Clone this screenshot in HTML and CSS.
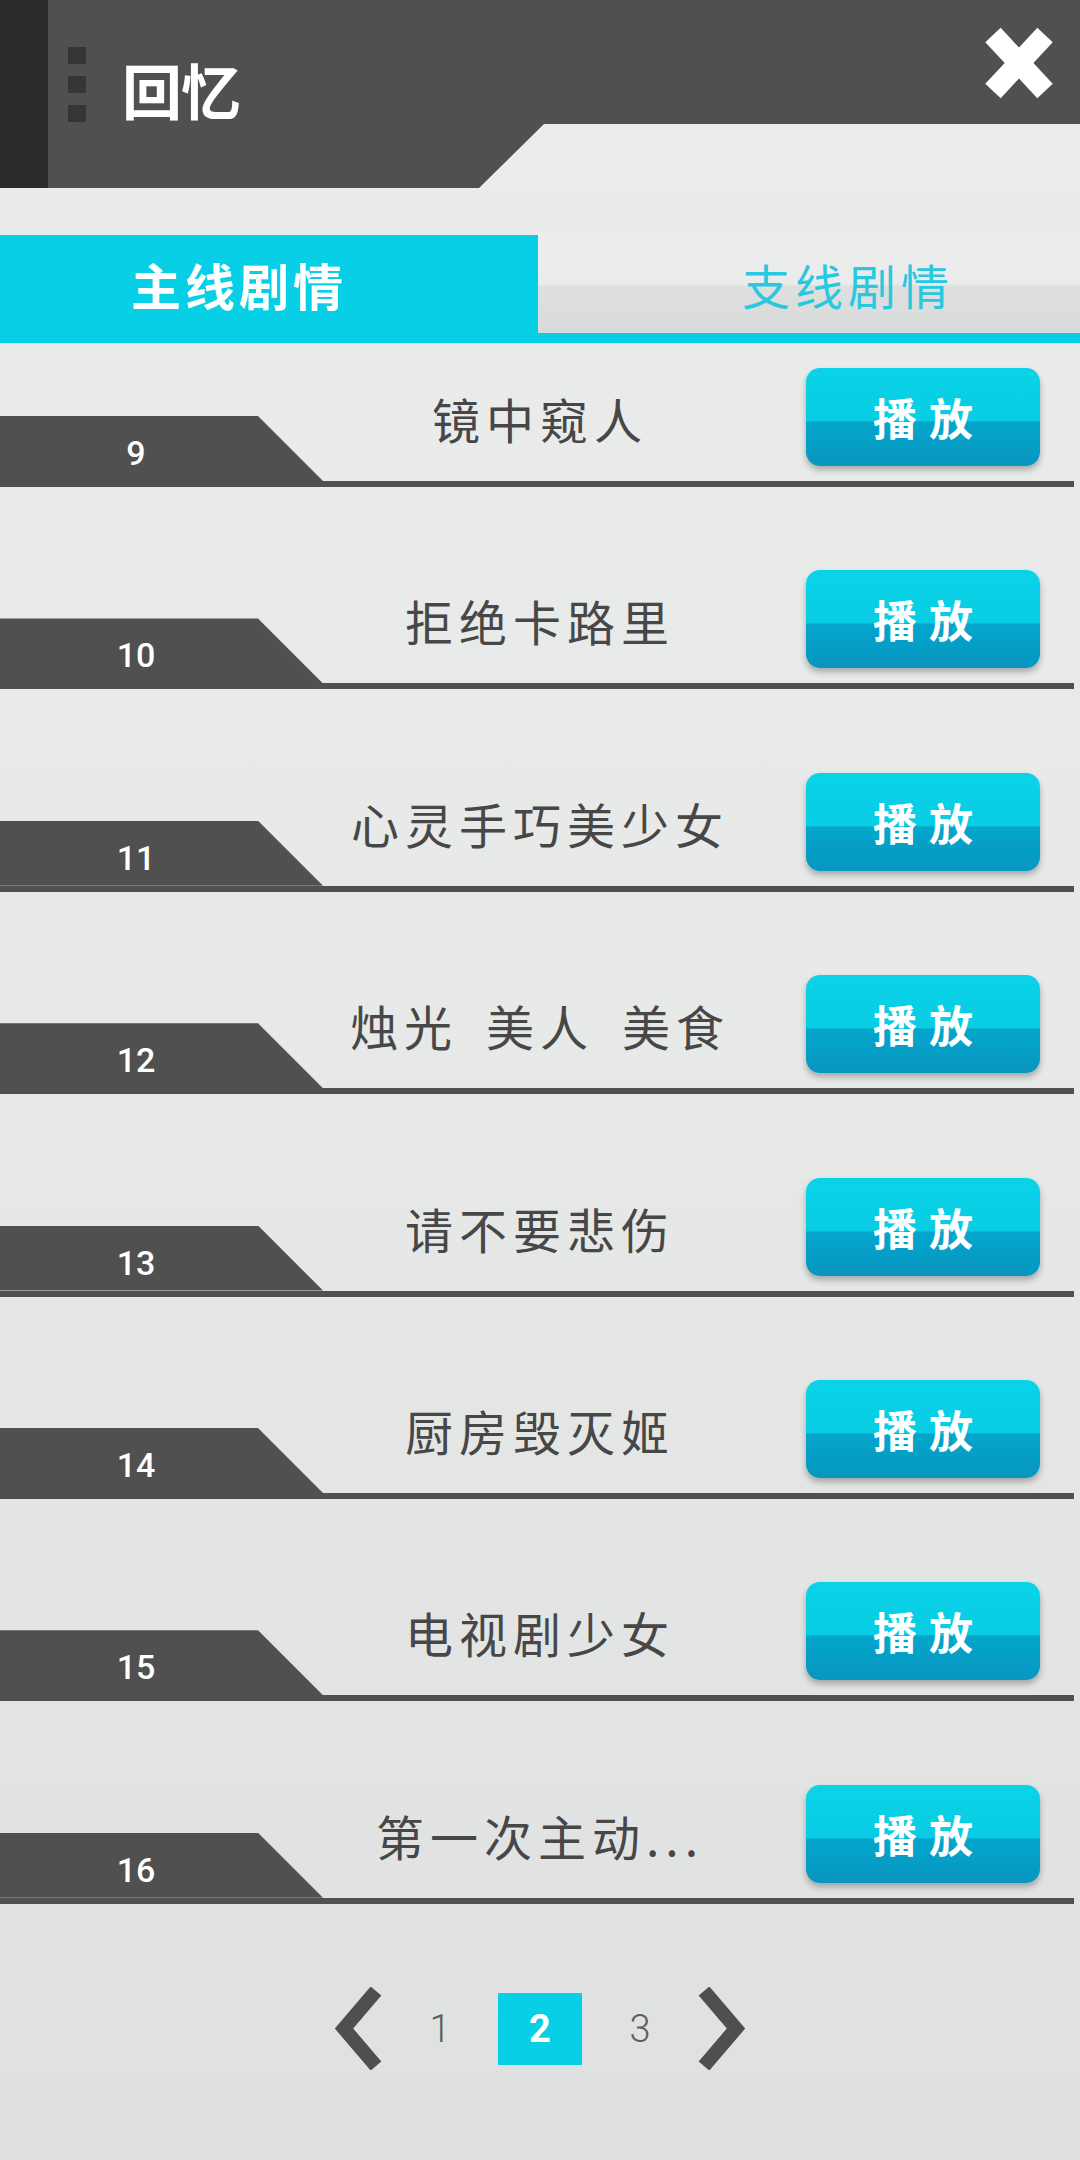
FILE: index.html
```html
<!DOCTYPE html>
<html lang="zh-CN">
<head>
<meta charset="utf-8">
<title>回忆</title>
<link rel="stylesheet" href="styles.css">
</head>
<body>
<div class="page">
  <header class="header">
    <div class="strip"></div>
    <div class="dots"><span></span><span></span><span></span></div>
    <h1 class="title">回忆</h1>
    <div class="spacer"></div>
    <svg class="close" viewBox="0 0 72 76" width="72" height="76" aria-label="关闭">
      <path d="M10 10 L62 66 M62 10 L10 66" stroke="#fff" stroke-width="21" stroke-linecap="butt" fill="none"/>
    </svg>
  </header>

  <nav class="tabs">
    <div class="tab tab-active"><span>主线剧情</span></div>
    <div class="tab tab-idle"><span>支线剧情</span></div>
  </nav>

  <ul class="list">
    <li class="row"><div class="row-inner"><div class="num"><span>9</span></div><div class="name">镜中窥人</div><button class="play">播放</button></div></li>
    <li class="row"><div class="row-inner"><div class="num"><span>10</span></div><div class="name">拒绝卡路里</div><button class="play">播放</button></div></li>
    <li class="row"><div class="row-inner"><div class="num"><span>11</span></div><div class="name">心灵手巧美少女</div><button class="play">播放</button></div></li>
    <li class="row"><div class="row-inner"><div class="num"><span>12</span></div><div class="name">烛光<span class="sp"></span>美人<span class="sp"></span>美食</div><button class="play">播放</button></div></li>
    <li class="row"><div class="row-inner"><div class="num"><span>13</span></div><div class="name">请不要悲伤</div><button class="play">播放</button></div></li>
    <li class="row"><div class="row-inner"><div class="num"><span>14</span></div><div class="name">厨房毁灭姬</div><button class="play">播放</button></div></li>
    <li class="row"><div class="row-inner"><div class="num"><span>15</span></div><div class="name">电视剧少女</div><button class="play">播放</button></div></li>
    <li class="row"><div class="row-inner"><div class="num"><span>16</span></div><div class="name">第一次主动...</div><button class="play">播放</button></div></li>
  </ul>

  <div class="pager">
    <svg class="chev" viewBox="0 0 50 83" width="50" height="83"><polyline points="44,4 12,41.5 44,79" fill="none" stroke="#4f4f4f" stroke-width="14" stroke-linejoin="miter" stroke-miterlimit="10"/></svg>
    <span class="pg">1</span>
    <span class="pg pg-on">2</span>
    <span class="pg">3</span>
    <svg class="chev" viewBox="0 0 50 83" width="50" height="83"><polyline points="6,4 38,41.5 6,79" fill="none" stroke="#4f4f4f" stroke-width="14" stroke-linejoin="miter" stroke-miterlimit="10"/></svg>
  </div>
</div>
</body>
</html>
```

FILE: styles.css
```css
* { box-sizing: border-box; }

html, body {
  margin: 0;
  padding: 0;
}

body {
  width: 1080px;
  height: 2160px;
  overflow: hidden;
  background: linear-gradient(to bottom, #ebecec 0%, #e7e8e8 50%, #dfe1e1 100%);
  font-family: "Noto Sans CJK SC", "Noto Sans", sans-serif;
}

.page {
  width: 1080px;
  height: 2160px;
}

/* Header */
.header {
  display: flex;
  align-items: flex-start;
  height: 188px;
  background: #505050;
  clip-path: polygon(0 0, 100% 0, 100% 124px, 544px 124px, 479px 100%, 0 100%);
}

.strip {
  width: 48px;
  height: 188px;
  background: #2c2c2c;
  flex: none;
}

.dots {
  display: flex;
  flex-direction: column;
  gap: 12px;
  margin: 47px 0 0 20px;
}

.dots span {
  display: block;
  width: 18px;
  height: 17px;
  background: #363636;
}

.title {
  margin: 54px 0 0 36px;
  font-size: 60px;
  line-height: 70px;
  font-weight: 700;
  color: #ffffff;
  letter-spacing: -1px;
}

.spacer { flex: 1; }

.close {
  margin: 25px 25px 0 0;
  display: block;
}

/* Tabs */
.tabs {
  display: flex;
  margin-top: 47px;
  height: 108px;
  border-bottom: 10px solid #06cfe6;
}

.tab {
  height: 98px;
  display: flex;
  align-items: center;
}

.tab-active {
  width: 538px;
  background: #06cfe6;
  padding-left: 131px;
}

.tab-active span {
  font-size: 50px;
  font-weight: 700;
  letter-spacing: 4px;
  color: #ffffff;
}

.tab-idle {
  flex: 1;
  background: linear-gradient(to bottom, #ededed 0%, #eaebeb 50%, #dedfdf 52%, #d9dbdb 100%);
  padding-left: 204px;
}

.tab-idle span {
  font-size: 48px;
  letter-spacing: 5px;
  color: #2ac8df;
}

/* List */
.list {
  list-style: none;
  margin: 0;
  padding: 0;
}

.row {
  height: 202.4px;
  padding-top: 25px;
}

.row-inner {
  display: flex;
  align-items: flex-start;
  width: 1074px;
  height: 119px;
  border-bottom: 6px solid #505050;
}

.num {
  width: 323px;
  height: 65px;
  align-self: flex-end;
  background: #505050;
  clip-path: polygon(0 0, 258px 0, 100% 100%, 0 100%);
  flex: none;
}

.num span {
  display: block;
  width: 272px;
  text-align: center;
  font-family: "Roboto", "Liberation Sans", sans-serif;
  font-size: 34px;
  font-weight: 500;
  line-height: 74px;
  color: #ffffff;
}

.name {
  flex: 1;
  margin-top: 26px;
  padding-right: 49px;
  text-align: center;
  font-size: 48px;
  line-height: 48px;
  letter-spacing: 6px;
  color: #474747;
  white-space: nowrap;
}

.sp {
  display: inline-block;
  width: 28px;
}

.play {
  width: 234px;
  height: 98px;
  margin-right: 34px;
  border: none;
  border-radius: 14px;
  background: linear-gradient(to bottom, #0ad3e8 0%, #08cce3 54%, #03a6cc 55%, #0896bf 100%);
  box-shadow: 0 4px 6px rgba(0, 0, 0, 0.28);
  font-family: "Noto Sans CJK SC", "Noto Sans", sans-serif;
  font-size: 44px;
  font-weight: 700;
  color: #ffffff;
  letter-spacing: 12px;
  padding: 0 0 0 12px;
  line-height: 98px;
  flex: none;
}

/* Pager */
.pager {
  display: flex;
  justify-content: center;
  align-items: center;
  gap: 16px;
  margin-top: 25px;
  height: 83px;
}

.chev { display: block; flex: none; }

.pg {
  width: 84px;
  height: 72px;
  display: flex;
  align-items: center;
  justify-content: center;
  font-family: "Roboto", "Liberation Sans", sans-serif;
  font-size: 38px;
  font-weight: 300;
  color: #5e5e5e;
}

.pg-on {
  background: #06cfe6;
  color: #ffffff;
  font-weight: 700;
}
```
